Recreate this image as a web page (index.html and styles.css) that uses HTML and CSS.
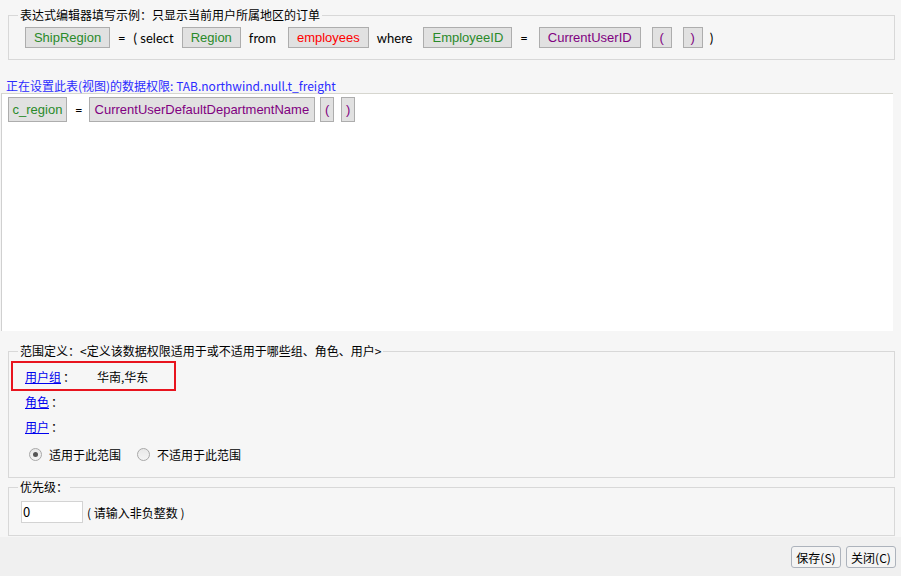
FILE: index.html
```html
<!DOCTYPE html>
<html lang="zh-CN">
<head>
<meta charset="utf-8">
<title>数据权限</title>
<link rel="stylesheet" href="styles.css">
</head>
<body>
<div class="main">
  <fieldset class="box example">
    <legend>表达式编辑器填写示例：只显示当前用户所属地区的订单</legend>
    <div class="expr">
      <span class="tok field wide">ShipRegion</span>
      <span class="txt">=</span>
      <span class="txt">( select</span>
      <span class="tok field">Region</span>
      <span class="txt gap12">from</span>
      <span class="tok table">employees</span>
      <span class="txt gap11">where</span>
      <span class="tok field">EmployeeID</span>
      <span class="txt gap11">=</span>
      <span class="tok func gap11">CurrentUserID</span>
      <span class="tok func paren">(</span>
      <span class="tok func paren last">)</span>
      <span class="txt">)</span>
    </div>
  </fieldset>

  <div class="target">正在设置此表(视图)的数据权限: TAB.northwind.null.t_freight</div>

  <div class="editor">
    <div class="expr2">
      <span class="tok2 field">c_region</span>
      <span class="txt2">=</span>
      <span class="tok2 func">CurrentUserDefaultDepartmentName</span>
      <span class="tok2 func paren2 p1">(</span>
      <span class="tok2 func paren2 p2">)</span>
    </div>
  </div>

  <fieldset class="box scope">
    <legend>范围定义：&lt;定义该数据权限适用于或不适用于哪些组、角色、用户&gt;</legend>
    <div class="highlight"></div>
    <div class="row"><a href="#" class="lnk">用户组</a><span class="colon">：</span><span class="val">华南,华东</span></div>
    <div class="row"><a href="#" class="lnk">角色</a><span class="colon">：</span></div>
    <div class="row"><a href="#" class="lnk">用户</a><span class="colon">：</span></div>
    <div class="radios">
      <label class="radio"><span class="dot checked"></span>适用于此范围</label>
      <label class="radio"><span class="dot"></span>不适用于此范围</label>
    </div>
  </fieldset>

  <fieldset class="box prio">
    <legend>优先级：</legend>
    <div class="prio-row">
      <span class="input">0</span>
      <span class="hint">( 请输入非负整数 )</span>
    </div>
  </fieldset>
</div>
<div class="footer">
  <span class="btn">保存(S)</span>
  <span class="btn">关闭(C)</span>
</div>
</body>
</html>
```
FILE: styles.css
```css
* { box-sizing: border-box; }
html, body { margin: 0; padding: 0; }
body {
  width: 901px;
  height: 576px;
  background: #f0f0f0;
  font-family: "Noto Sans CJK SC", "Noto Sans", sans-serif;
  font-size: 12px;
  color: #000;
  overflow: hidden;
}
.main {
  background: #f6f6f6;
  height: 537px;
  padding-top: 6px;
  overflow: hidden;
}
.box {
  margin: 0 6px 0 8px;
  border: 1px solid #d8d8d8;
  padding: 0;
  min-width: 0;
}
.box legend {
  padding: 0 2px;
  margin-left: -7px;
  line-height: 18px;
  font-size: 12px;
}
.example { padding: 3px 16px 11px 16px; }
.expr {
  display: flex;
  align-items: center;
  height: 21px;
  font-family: "Liberation Sans", Arial, sans-serif;
  font-size: 13px;
}
.tok {
  display: inline-flex;
  align-items: center;
  justify-content: center;
  height: 21px;
  padding: 0 8px;
  border: 1px solid #adadad;
  background: #e1e1e1;
  margin-right: 8px;
}
.tok.wide { width: 85px; padding: 0; }
.tok.gap11 { margin-right: 11px; }
.tok.paren { width: 20px; padding: 0; margin-right: 11px; }
.tok.paren.last { margin-right: 7px; }
.field { color: #2a8a2a; }
.table { color: #ff0000; }
.func { color: #800080; }
.txt {
  font-family: Lato, "Noto Sans", sans-serif;
  font-size: 13px;
  margin-right: 8px;
}
.txt.gap12 { margin-right: 12px; }
.txt.gap11 { margin-right: 11px; }
.target {
  margin-top: 16px;
  padding-left: 6px;
  height: 17px;
  line-height: 19px;
  color: #2b2bff;
  font-size: 12px;
}
.editor {
  margin-left: 1px;
  width: 892px;
  height: 238px;
  background: #fff;
  border-top: 1px solid #d6d6cf;
  border-left: 1px solid #d0d0d0;
  padding: 3px 0 0 6px;
}
.expr2 {
  display: flex;
  align-items: center;
  font-family: "Liberation Sans", Arial, sans-serif;
  font-size: 13px;
}
.tok2 {
  display: inline-flex;
  align-items: center;
  height: 25px;
  padding: 0 5px;
  border: 1px solid #adadad;
  background: #e1e1e1;
}
.tok2.field { width: 59px; padding: 0; justify-content: center; }
.tok2.paren2 { width: 14px; padding: 0; justify-content: center; }
.tok2.p1 { margin-left: 5px; }
.tok2.p2 { margin-left: 7px; }
.txt2 { margin: 0 6px 0 8px; font-family: Lato, sans-serif; }
.scope {
  margin-top: 11px;
  padding: 4px 0 10px 16px;
  position: relative;
}
.highlight {
  position: absolute;
  left: 2px;
  top: 1px;
  width: 165px;
  height: 30px;
  border: 2px solid #e8141e;
}
.row {
  height: 25px;
  line-height: 25px;
  display: flex;
  align-items: center;
}
.lnk { color: #0000ee; text-decoration: underline; }
.colon { margin-left: 2px; }
.val { margin-left: 22px; }
.radios {
  margin-top: 3px;
  height: 25px;
  display: flex;
  align-items: center;
  padding-left: 4px;
}
.radio { display: inline-flex; align-items: center; margin-right: 16px; }
.dot {
  width: 13px;
  height: 13px;
  border-radius: 50%;
  border: 1px solid #a8a8a8;
  background: linear-gradient(#e8e8e8, #f4f4f4);
  margin-right: 7px;
  position: relative;
}
.dot.checked::after {
  content: "";
  position: absolute;
  left: 3px; top: 3px;
  width: 5px; height: 5px;
  border-radius: 50%;
  background: #555;
}
.prio {
  margin-top: 0;
  padding: 5px 0 12px 12px;
}
.prio legend { margin-left: -3px; }
.prio-row { display: flex; align-items: center; }
.input {
  width: 62px;
  height: 22px;
  background: #fff;
  border: 1px solid #d3d3d3;
  padding-left: 1px;
  line-height: 20px;
  font-family: "Noto Sans CJK SC", sans-serif;
  font-size: 13px;
}
.hint { margin-left: 4px; }
.footer {
  height: 39px;
  display: flex;
  justify-content: flex-end;
  align-items: flex-start;
  padding: 9px 5px 0 0;
  gap: 5px;
}
.btn {
  width: 50px;
  height: 22px;
  border: 1px solid #adb3bc;
  border-radius: 3px;
  background: #f4f4f4;
  display: inline-flex;
  align-items: center;
  justify-content: center;
  font-size: 12px;
}
```
